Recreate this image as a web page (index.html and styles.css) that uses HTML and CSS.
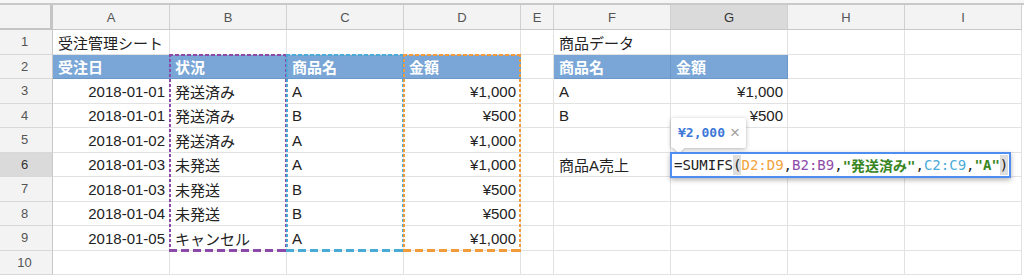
FILE: index.html
```html
<!DOCTYPE html>
<html lang="ja">
<head>
<meta charset="utf-8">
<title>受注管理シート</title>
<link rel="stylesheet" href="styles.css">
</head>
<body>
<div class="sheet">
  <div class="grid">
    <div class="corner"></div>
    <div class="ch">A</div><div class="ch">B</div><div class="ch">C</div><div class="ch">D</div><div class="ch">E</div><div class="ch">F</div><div class="ch sel">G</div><div class="ch">H</div><div class="ch">I</div>

    <div class="rh">1</div>
    <div class="c">受注管理シート</div><div class="c"></div><div class="c"></div><div class="c"></div><div class="c"></div><div class="c">商品データ</div><div class="c"></div><div class="c"></div><div class="c"></div>

    <div class="rh">2</div>
    <div class="c hdr">受注日</div><div class="c hdr">状況</div><div class="c hdr">商品名</div><div class="c hdr">金額</div><div class="c"></div><div class="c hdr">商品名</div><div class="c hdr">金額</div><div class="c"></div><div class="c"></div>

    <div class="rh">3</div>
    <div class="c num">2018-01-01</div><div class="c">発送済み</div><div class="c">A</div><div class="c num">¥1,000</div><div class="c"></div><div class="c">A</div><div class="c num">¥1,000</div><div class="c"></div><div class="c"></div>

    <div class="rh">4</div>
    <div class="c num">2018-01-01</div><div class="c">発送済み</div><div class="c">B</div><div class="c num">¥500</div><div class="c"></div><div class="c">B</div><div class="c num">¥500</div><div class="c"></div><div class="c"></div>

    <div class="rh">5</div>
    <div class="c num">2018-01-02</div><div class="c">発送済み</div><div class="c">A</div><div class="c num">¥1,000</div><div class="c"></div><div class="c"></div><div class="c"></div><div class="c"></div><div class="c"></div>

    <div class="rh sel">6</div>
    <div class="c num">2018-01-03</div><div class="c">未発送</div><div class="c">A</div><div class="c num">¥1,000</div><div class="c"></div><div class="c">商品A売上</div><div class="c"></div><div class="c"></div><div class="c"></div>

    <div class="rh">7</div>
    <div class="c num">2018-01-03</div><div class="c">未発送</div><div class="c">B</div><div class="c num">¥500</div><div class="c"></div><div class="c"></div><div class="c"></div><div class="c"></div><div class="c"></div>

    <div class="rh">8</div>
    <div class="c num">2018-01-04</div><div class="c">未発送</div><div class="c">B</div><div class="c num">¥500</div><div class="c"></div><div class="c"></div><div class="c"></div><div class="c"></div><div class="c"></div>

    <div class="rh">9</div>
    <div class="c num">2018-01-05</div><div class="c">キャンセル</div><div class="c">A</div><div class="c num">¥1,000</div><div class="c"></div><div class="c"></div><div class="c"></div><div class="c"></div><div class="c"></div>

    <div class="rh">10</div>
    <div class="c"></div><div class="c"></div><div class="c"></div><div class="c"></div><div class="c"></div><div class="c"></div><div class="c"></div><div class="c"></div><div class="c"></div>

    <div class="range range-b"></div>
    <div class="range range-c"></div>
    <div class="range range-d"></div>

    <div class="editor-anchor">
      <div class="tip"><span class="tip-val">¥2,000</span><span class="tip-x">×</span></div>
      <div class="editor"><span>=SUMIFS</span><span class="paren">(</span><span class="r-d">D2:D9</span>,<span class="r-b">B2:B9</span>,<span class="str">"発送済み"</span>,<span class="r-c">C2:C9</span>,<span class="str">"A"</span><span class="paren">)</span></div>
    </div>
  </div>
</div>
</body>
</html>
```

FILE: styles.css
```css
* { box-sizing: border-box; }
html, body { margin: 0; padding: 0; background: #ffffff; }
body {
  width: 1024px;
  height: 280px;
  overflow: hidden;
  font-family: "Liberation Sans", "Noto Sans CJK JP", sans-serif;
  color: #222222;
}
.sheet {
  padding-top: 3px;
  background: #f6f6f6;
}
.grid {
  position: relative;
  display: grid;
  grid-template-columns: 53px 117px 117px 117px 117px 33px 117px 117px 117px 117px;
  grid-template-rows: 25px repeat(10, 24.5px);
  border-top: 2px solid #c9c9c9;
  background: #ffffff;
}
.corner {
  background: #f3f3f3;
  border-right: 3px solid #c4c4c4;
  border-bottom: 2px solid #c4c4c4;
}
.ch {
  background: #f3f3f3;
  border-right: 1px solid #d0d0d0;
  border-bottom: 1px solid #c8c8c8;
  font-size: 13px;
  color: #555555;
  display: flex;
  align-items: center;
  justify-content: center;
}
.rh {
  background: #f3f3f3;
  border-right: 1px solid #c8c8c8;
  border-bottom: 1px solid #d8d8d8;
  font-size: 13px;
  color: #555555;
  display: flex;
  align-items: center;
  justify-content: center;
  padding-right: 3px;
}
.ch.sel, .rh.sel { background: #dadada; color: #333333; }
.c {
  border-right: 1px solid #e2e2e2;
  border-bottom: 1px solid #e2e2e2;
  font-size: 15px;
  display: flex;
  align-items: center;
  padding: 1px 4px 0 5px;
  white-space: nowrap;
  overflow: visible;
}
.c.num { justify-content: flex-end; }
.c.hdr {
  background: #79a6d6;
  color: #ffffff;
  font-weight: bold;
  border-right-color: #6b98c9;
  border-bottom-color: #6b98c9;
}
.range {
  position: absolute;
  top: -1px;
  bottom: -1px;
  left: -1px;
  right: 0;
  pointer-events: none;
  background:
    repeating-linear-gradient(to bottom, var(--rc) 0 3px, transparent 3px 5px) left top / 2px 100% no-repeat,
    repeating-linear-gradient(to bottom, var(--rc) 0 3px, transparent 3px 5px) right top / 2px 100% no-repeat,
    repeating-linear-gradient(to right, var(--rc) 0 4px, transparent 4px 6px) left top / 100% 2px no-repeat,
    repeating-linear-gradient(to right, var(--rc) 0 8px, transparent 8px 12px) left bottom / 100% 3px no-repeat;
}
.range-b { grid-area: 3 / 3 / 11 / 4; --rc: #8b4aa8; }
.range-c { grid-area: 3 / 4 / 11 / 5; --rc: #49abd6; }
.range-d { grid-area: 3 / 5 / 11 / 6; --rc: #f29b3a; }

.editor-anchor {
  position: absolute;
  grid-area: 7 / 8 / 8 / 9;
  inset: 0;
}
.editor {
  position: absolute;
  left: -1px;
  top: -1px;
  width: 341px;
  height: 26px;
  border: 2px solid #4d8ef0;
  background: #ffffff;
  box-shadow: 0 2px 5px rgba(0, 0, 0, 0.3);
  font-family: "DejaVu Sans Mono", "Noto Sans CJK JP", monospace;
  font-size: 14px;
  color: #222222;
  display: flex;
  align-items: center;
  padding-left: 2px;
  white-space: nowrap;
}
.paren { background: #dedede; line-height: 20px; }
.r-d { color: #f2a33c; }
.r-b { color: #8e4aa8; }
.r-c { color: #4aacd8; }
.str { color: #38861f; font-weight: bold; }
.tip {
  position: absolute;
  left: 0;
  top: -35px;
  width: 75px;
  height: 30px;
  background: #ffffff;
  border-radius: 2px;
  box-shadow: 0 1px 4px rgba(0, 0, 0, 0.3);
  display: flex;
  align-items: center;
  gap: 5px;
  padding-left: 7px;
}
.tip::after {
  content: "";
  position: absolute;
  left: 4px;
  bottom: -4px;
  width: 8px;
  height: 8px;
  background: #ffffff;
  transform: rotate(45deg);
  box-shadow: 1px 1px 2px rgba(0, 0, 0, 0.15);
}
.tip-val {
  font-family: "DejaVu Sans Mono", monospace;
  font-size: 13px;
  font-weight: bold;
  color: #3c78d8;
}
.tip-x {
  font-size: 17px;
  color: #a0a0a0;
  line-height: 1;
}
```
